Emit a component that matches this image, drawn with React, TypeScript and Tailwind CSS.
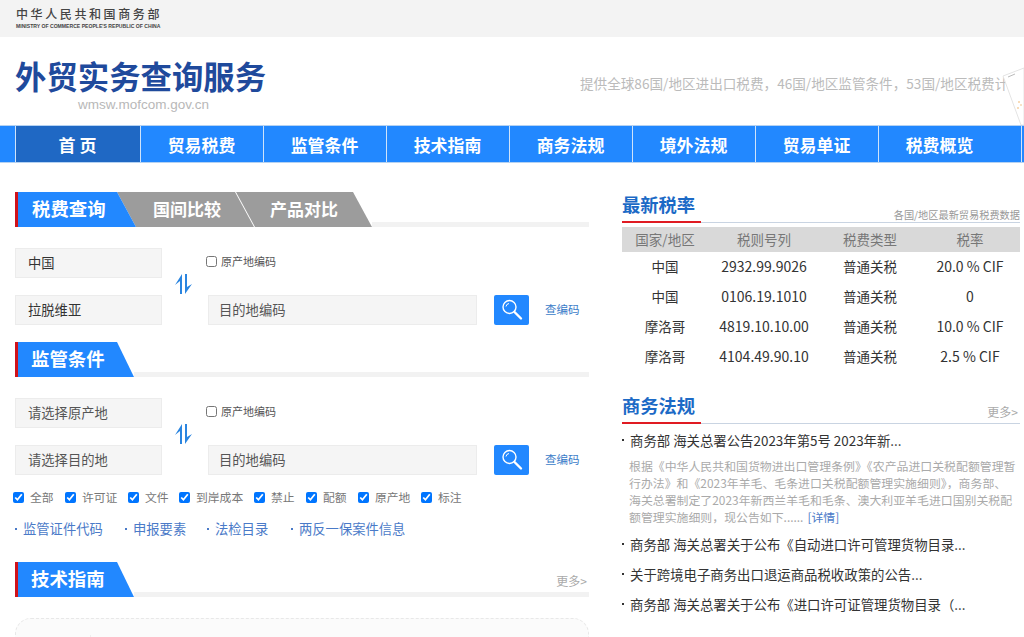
// =============================================================================
// DATA
// =============================================================================

const NAV_ITEMS = ['贸易税费', '监管条件', '技术指南', '商务法规', '境外法规', '贸易单证'];

const FILTERS = [
  { label: '全部', width: 'w-[52px]' },
  { label: '许可证', width: 'w-[63px]' },
  { label: '文件', width: 'w-[51px]' },
  { label: '到岸成本', width: 'w-[75px]' },
  { label: '禁止', width: 'w-[52px]' },
  { label: '配额', width: 'w-[52px]' },
  { label: '原产地', width: 'w-[63px]' },
  { label: '标注', width: 'w-[52px]' },
];

const QUICK_LINKS = [
  { label: '监管证件代码', width: 'w-[110px]' },
  { label: '申报要素', width: 'w-[82px]' },
  { label: '法检目录', width: 'w-[84px]' },
  { label: '两反一保案件信息', width: 'w-[120px]' },
];

const RATES = [
  ['中国', '2932.99.9026', '普通关税', '20.0 % CIF'],
  ['中国', '0106.19.1010', '普通关税', '0'],
  ['摩洛哥', '4819.10.10.00', '普通关税', '10.0 % CIF'],
  ['摩洛哥', '4104.49.90.10', '普通关税', '2.5 % CIF'],
];

const LAW_ITEMS = [
  '商务部 海关总署关于公布《自动进口许可管理货物目录...',
  '关于跨境电子商务出口退运商品税收政策的公告...',
  '商务部 海关总署关于公布《进口许可证管理货物目录（...',
];

// =============================================================================
// ICONS
// =============================================================================

function SwapIcon() {
  return (
    <svg width="17" height="20" viewBox="0 0 17 20" fill="#2a85e0">
      <polygon points="7,0 7,20 5,20 5,7 0,11" />
      <polygon points="10,20 10,0 12,0 12,13 17,10" />
    </svg>
  );
}

function SearchIcon() {
  return (
    <svg width="24" height="24" viewBox="0 0 24 24" fill="none" stroke="#fff">
      <circle cx="9.5" cy="9" r="6.5" strokeWidth="1.4" />
      <path d="M6 8.5a3.6 3.6 0 0 1 3-3" strokeWidth="1" />
      <path d="M14.5 14l6.5 6.5" strokeWidth="2.4" strokeLinecap="round" />
    </svg>
  );
}

function PaperCorner() {
  return (
    <svg className="absolute left-[1000px] top-[64px]" width="24" height="61" viewBox="0 0 24 61">
      <polygon points="3,12 24,4 24,61 21,61" fill="#fff" stroke="#e4e4e4" />
      <path d="M8 13l7-3" stroke="#bbb" strokeWidth="1" />
      <circle cx="19" cy="38" r="0.8" fill="#f0b060" />
      <circle cx="21" cy="41" r="0.8" fill="#f0c080" />
      <circle cx="18" cy="44" r="0.8" fill="#f0b060" />
    </svg>
  );
}

function Dot({ className }: { className: string }) {
  return <span className={`mr-[6px] h-[2px] w-[2px] shrink-0 ${className}`} />;
}

// =============================================================================
// LEFT COLUMN
// =============================================================================

function BlueTab({ title }: { title: string }) {
  return (
    <div className="flex h-[35px] items-end">
      <div className="h-full w-[3px] bg-[#d0121b]" />
      <div className="flex h-full w-[116px] items-center bg-[#2288ff] pb-[1px] pl-[13px] text-[18.4px] font-bold text-white [clip-path:polygon(0_0,99px_0,100%_100%,0_100%)]">
        {title}
      </div>
      <div className="h-[5px] flex-1 bg-[#f2f2f2]" />
    </div>
  );
}

function LookupForm({ origin, originMuted, target, targetMuted }: { origin: string; originMuted?: boolean; target: string; targetMuted?: boolean }) {
  return (
    <div className="mt-[21px] flex h-[77px]">
      <div className="flex w-[147px] flex-col justify-between">
        <div className={`flex h-[30px] items-center border border-[#ececec] bg-[#f5f5f5] pl-[12px] text-[13.3px] ${originMuted ? 'text-[#555]' : 'text-[#333]'}`}>
          {origin}
        </div>
        <div className={`flex h-[30px] items-center border border-[#ececec] bg-[#f5f5f5] pl-[12px] text-[13.3px] ${targetMuted ? 'text-[#555]' : 'text-[#333]'}`}>
          {target}
        </div>
      </div>
      <div className="flex w-[46px] items-center justify-center pb-[6px] pr-[4px]">
        <SwapIcon />
      </div>
      <div className="flex flex-1 flex-col justify-between">
        <label className="ml-[-2px] flex h-[30px] items-center pb-[4px] text-[11px] text-[#555]">
          <input type="checkbox" className="mr-[4px] h-[11px] w-[11px]" readOnly />
          原产地编码
        </label>
        <div className="flex h-[30px] items-center">
          <div className="flex h-full w-[269px] items-center border border-[#ececec] bg-[#f5f5f5] pl-[10px] text-[13.3px] text-[#555]">
            目的地编码
          </div>
          <button className="ml-[17px] flex h-full w-[35px] items-center justify-center rounded-[2px] bg-[#2288ff]">
            <SearchIcon />
          </button>
          <span className="ml-[16px] text-[11.5px] text-[#3a7cc8]">查编码</span>
        </div>
      </div>
    </div>
  );
}

function LeftColumn() {
  return (
    <div className="w-[574px]">
      <div className="flex h-[35px] items-end">
        <div className="h-full w-[3px] bg-[#d0121b]" />
        <div className="z-20 flex h-full w-[118px] items-center bg-[#2288ff] pb-[1px] pl-[14px] text-[18.4px] font-bold text-white [clip-path:polygon(0_0,99px_0,100%_100%,0_100%)]">
          税费查询
        </div>
        <div className="z-10 ml-[-19px] flex h-full w-[137px] items-center bg-[#9c9c9c] pb-[1px] pl-[36px] text-[17px] font-bold text-white [clip-path:polygon(0_0,118px_0,100%_100%,19px_100%)]">
          国间比较
        </div>
        <div className="ml-[-19px] flex h-full w-[137px] items-center bg-[#9c9c9c] pb-[1px] pl-[35px] text-[17px] font-bold text-white [clip-path:polygon(1px_0,118px_0,100%_100%,20px_100%)]">
          产品对比
        </div>
        <div className="h-[5px] flex-1 bg-[#f2f2f2]" />
      </div>
      <LookupForm origin="中国" target="拉脱维亚" />

      <div className="mt-[17px]">
        <BlueTab title="监管条件" />
      </div>
      <LookupForm origin="请选择原产地" originMuted target="请选择目的地" targetMuted />

      <div className="ml-[-2px] mt-[16px] flex h-[12px] items-center text-[11.8px] text-[#777]">
        {FILTERS.map((filter) => (
          <label key={filter.label} className={`flex items-center ${filter.width}`}>
            <input type="checkbox" defaultChecked className="mr-[6px] h-[11px] w-[11px] shrink-0" />
            <span className="whitespace-nowrap">{filter.label}</span>
          </label>
        ))}
      </div>

      <div className="mt-[17px] flex h-[18px] items-center text-[13.3px] text-[#4a7ac8]">
        {QUICK_LINKS.map((link) => (
          <div key={link.label} className={`flex items-center whitespace-nowrap ${link.width}`}>
            <Dot className="bg-[#4a7ac8]" />
            {link.label}
          </div>
        ))}
      </div>

      <div className="relative mt-[24px]">
        <BlueTab title="技术指南" />
        <span className="absolute right-[2px] top-[10px] text-[12px] text-[#aaa]">更多&gt;</span>
      </div>

      <div className="mt-[21px] h-[120px] rounded-[16px] border border-dashed border-[#e8e8e8] bg-[#fbfbfb] pl-[74px] pt-[16px]">
        <div className="h-[60px] w-px bg-[#eeeeee]" />
      </div>
    </div>
  );
}

// =============================================================================
// RIGHT COLUMN
// =============================================================================

function RightTitle({ title, children }: { title: string; children: React.ReactNode }) {
  return (
    <div className="relative flex h-[30px] items-start justify-between border-b border-[#c9d4e2]">
      <span className="text-[18.3px] font-bold leading-[23px] text-[#1c6ac6]">{title}</span>
      {children}
      <div className="absolute bottom-[-1px] left-0 h-[2px] w-[79px] bg-[#e01b22]" />
    </div>
  );
}

function RightColumn() {
  return (
    <div className="ml-[33px] w-[398px]">
      <div className="mt-[1px]">
        <RightTitle title="最新税率">
          <span className="mt-[14px] whitespace-nowrap text-[10.2px] leading-[15px] text-[#999]">各国/地区最新贸易税费数据</span>
        </RightTitle>
      </div>

      <div className="mt-[4px] grid h-[25px] grid-cols-[86px_112px_100px_100px] items-center bg-[#d9d9d9] text-center text-[13.5px] text-[#777]">
        <span>国家/地区</span>
        <span>税则号列</span>
        <span>税费类型</span>
        <span>税率</span>
      </div>
      <div>
        {RATES.map((row, index) => (
          <div key={index} className="grid h-[30px] grid-cols-[86px_112px_100px_100px] items-center pb-[2px] text-center text-[13.5px] text-[#333]">
            <span>{row[0]}</span>
            <span className="text-[14px]">{row[1]}</span>
            <span>{row[2]}</span>
            <span className="text-[14px]">{row[3]}</span>
          </div>
        ))}
      </div>

      <div className="mt-[22px]">
        <RightTitle title="商务法规">
          <span className="mt-[9px] pr-[2px] text-[12px] leading-[18px] text-[#aaa]">更多&gt;</span>
        </RightTitle>
      </div>

      <div className="mt-[6px] flex h-[20px] items-center whitespace-nowrap text-[13.4px] text-[#333]">
        <Dot className="bg-[#333]" />
        商务部 海关总署公告2023年第5号 2023年新...
      </div>
      <p className="ml-[7px] mt-[7px] whitespace-nowrap text-[11.9px] leading-[17px] text-[#aaa]">
        根据《中华人民共和国货物进出口管理条例》《农产品进口关税配额管理暂
        <br />
        行办法》和《2023年羊毛、毛条进口关税配额管理实施细则》，商务部、
        <br />
        海关总署制定了2023年新西兰羊毛和毛条、澳大利亚羊毛进口国别关税配
        <br />
        额管理实施细则，现公告如下......
        <span className="ml-[4px] text-[#4a7ac8]">[详情]</span>
      </p>
      <div className="mt-[4px]">
        {LAW_ITEMS.map((item) => (
          <div key={item} className="flex h-[30px] items-center whitespace-nowrap text-[13.4px] text-[#333]">
            <Dot className="bg-[#333]" />
            {item}
          </div>
        ))}
      </div>
    </div>
  );
}

// =============================================================================
// APP
// =============================================================================

export default function App() {
  return (
    <div
      lang="zh-CN"
      className="relative h-[637px] w-[1024px] overflow-hidden bg-white font-['Noto_Sans_CJK_SC','Liberation_Sans',sans-serif]"
    >
      {/* Ministry bar */}
      <div className="flex h-[37px] flex-col bg-[#f3f3f3] pl-[16px] pt-[6px]">
        <span className="text-[12px] font-medium leading-[15px] tracking-[2.6px] text-[#444]">中华人民共和国商务部</span>
        <span className="mt-[1px] whitespace-nowrap font-['Liberation_Sans',sans-serif] text-[5.1px] font-bold leading-[8px] text-[#444]">
          MINISTRY OF COMMERCE PEOPLE'S REPUBLIC OF CHINA
        </span>
      </div>

      {/* Site header */}
      <div className="flex h-[88px]">
        <div className="w-[564px] pl-[15px] pt-[18px]">
          <div className="text-[31.4px] font-bold leading-[42px] text-[#1f4a9c]">外贸实务查询服务</div>
          <div className="ml-[63px] mt-[-2px] font-['Liberation_Sans',sans-serif] text-[13.5px] leading-[20px] text-[#b8b8b8]">
            wmsw.mofcom.gov.cn
          </div>
        </div>
        <div className="ml-[16px] whitespace-nowrap pt-[37px] text-[13.6px] leading-[18px] text-[#bbb]">
          提供全球86国/地区进出口税费，46国/地区监管条件，53国/地区税费计.
        </div>
      </div>
      <PaperCorner />

      {/* Main nav */}
      <div className="flex h-[38px] border-y border-[#b5d2f2] bg-[#2288ff] pl-[15px]">
        <div className="flex w-[126px] items-center justify-center border-x border-[#cfe3fa] bg-[#1f68c4] pr-[1px] pt-[1px] text-[17px] font-bold text-white">
          首 页
        </div>
        {NAV_ITEMS.map((item) => (
          <div key={item} className="flex w-[123px] items-center justify-center border-r border-[#cfe3fa] pr-[1px] pt-[1px] text-[16.9px] font-bold text-white">
            {item}
          </div>
        ))}
        <div className="flex w-[143px] items-center justify-center border-r border-[#cfe3fa] pr-[21px] pt-[1px] text-[16.9px] font-bold text-white">
          税费概览
        </div>
      </div>

      {/* Content */}
      <div className="flex pl-[15px] pt-[29px]">
        <LeftColumn />
        <RightColumn />
      </div>
    </div>
  );
}
